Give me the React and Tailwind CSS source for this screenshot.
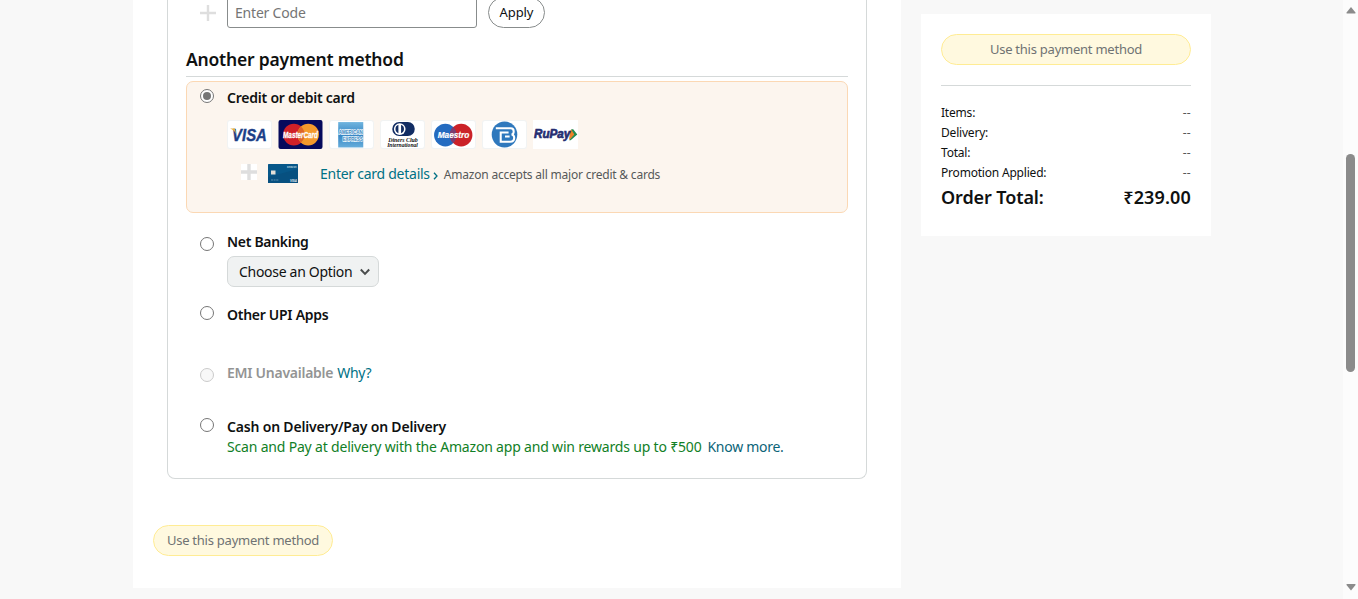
import React from 'react';

function Radio({ checked, disabled }) {
  return (
    <span
      className={
        'flex size-[14px] shrink-0 items-center justify-center rounded-full border ' +
        (disabled ? 'border-[#cbcbcb] bg-[#f8f8f8]' : 'border-[#767676] bg-white')
      }
    >
      {checked && <span className="size-[8px] rounded-full bg-[#757575]" />}
    </span>
  );
}

function Plus({ className, weight }) {
  return (
    <svg viewBox="0 0 16 16" className={className}>
      <path d="M8 0v16M0 8h16" stroke="#dedede" strokeWidth={weight} />
    </svg>
  );
}

function Logo({ children }) {
  return (
    <svg viewBox="0 0 44 28" preserveAspectRatio="none" className="h-[29px] w-[45px] shrink-0" fontFamily="Liberation Sans, sans-serif">
      {children}
    </svg>
  );
}

const Plate = ({ fill = '#fff', stroke = '#f1f3f3' }) => (
  <rect x="0.5" y="0.5" width="43" height="27" rx="2.5" fill={fill} stroke={stroke} />
);

function CardLogos() {
  return (
    <div className="mt-[14px] flex h-[29px] gap-[6px]">
      <Logo>
        <Plate />
        <text x="5" y="20" fontSize="16.5" fontWeight="bold" fontStyle="italic" fill="#1c3f88" stroke="#1c3f88" strokeWidth="0.4" textLength="34" lengthAdjust="spacingAndGlyphs">VISA</text>
        <path d="M3 8.2h4.600l1.600 6C8 11 6 9.500 3 8.200z" fill="#e8b23c" />
      </Logo>
      <Logo>
        <rect x="0.5" width="43" height="28" rx="2" fill="#060a5c" />
        <circle cx="15.500" cy="14" r="10.500" fill="#cf2028" />
        <circle cx="29.500" cy="14" r="10.500" fill="#f49a2c" />
        <path d="M22.500 6.200a10.500 10.500 0 0 1 0 15.600a10.500 10.500 0 0 1 0-15.600z" fill="#dd6529" />
        <text x="5" y="17.200" fontSize="8.5" fontWeight="bold" fontStyle="italic" fill="#fff" stroke="#fff" strokeWidth="0.300" textLength="34" lengthAdjust="spacingAndGlyphs">MasterCard</text>
      </Logo>
      <Logo>
        <Plate />
        <defs>
          <linearGradient id="amex" x1="0" y1="0" x2="0" y2="1">
            <stop offset="0" stopColor="#70b5df" />
            <stop offset="0.500" stopColor="#3585c4" />
            <stop offset="1" stopColor="#66addb" />
          </linearGradient>
        </defs>
        <rect x="9" y="2" width="24.500" height="24.500" fill="url(#amex)" />
        <text x="9.500" y="13.800" fontSize="5.500" fontWeight="bold" fill="#3a86bf" stroke="#eff8fd" strokeWidth="1.300" paintOrder="stroke" textLength="23.500" lengthAdjust="spacingAndGlyphs">AMERICAN</text>
        <text x="13.500" y="20" fontSize="5.500" fontWeight="bold" fill="#3a86bf" stroke="#eff8fd" strokeWidth="1.300" paintOrder="stroke" textLength="19.500" lengthAdjust="spacingAndGlyphs">EXPRESS</text>
      </Logo>
      <Logo>
        <Plate />
        <rect x="12" y="2" width="22" height="13.500" rx="6.750" fill="#112d64" />
        <circle cx="19.300" cy="8.750" r="5.700" fill="#fff" />
        <path d="M18 4.700a4.300 4.300 0 0 0 0 8.100zM20.600 4.700a4.300 4.300 0 0 1 0 8.100z" fill="#112d64" />
        <text x="8" y="21.300" fontFamily="Liberation Serif, serif" fontSize="6.5" fontWeight="bold" fontStyle="italic" fill="#111" textLength="29" lengthAdjust="spacingAndGlyphs">Diners Club</text>
        <text x="7" y="26.300" fontFamily="Liberation Serif, serif" fontSize="6" fontWeight="bold" fontStyle="italic" fill="#111" textLength="30" lengthAdjust="spacingAndGlyphs">International</text>
      </Logo>
      <Logo>
        <Plate />
        <circle cx="14" cy="14.500" r="11" fill="#236bc0" />
        <circle cx="29.500" cy="14.500" r="11" fill="#cb2229" />
        <path d="M21.800 6.700a11 11 0 0 1 0 15.600a11 11 0 0 1 0-15.600z" fill="#7b3c70" />
        <text x="6.500" y="17.700" fontSize="9" fontWeight="bold" fontStyle="italic" fill="#fff" stroke="#fff" strokeWidth="0.200" textLength="31" lengthAdjust="spacingAndGlyphs">Maestro</text>
      </Logo>
      <Logo>
        <Plate />
        <circle cx="22" cy="14" r="12.500" fill="#2e78bd" />
        <path d="M13.500 8H28q3 0 3 3 0 2.500-2 3 2.500.5 2.500 3.200 0 3.800-4 3.800H18.300V12H26M22.500 16H27" fill="none" stroke="#fff" strokeWidth="2" />
      </Logo>
      <Logo>
        <rect width="44" height="28" fill="#fff" />
        <path d="M37.500 9l3.500 5-5.500 5.500z" fill="#ef8128" />
        <path d="M37.300 9l2 0 4 5-6.500 5.500-1.500 0 5-5.500z" fill="#238b50" />
        <path d="M36.500 9.500l3.500 4.500-4.800 5z" fill="#ef8128" />
        <text x="1" y="17.500" fontSize="11.500" fontWeight="bold" fontStyle="italic" fill="#252d71" stroke="#252d71" strokeWidth="0.600" textLength="35.500" lengthAdjust="spacingAndGlyphs">RuPay</text>
      </Logo>
    </div>
  );
}

function CardThumb() {
  return (
    <svg viewBox="0 0 30 19" className="ml-[11px] h-[19px] w-[30px]" fontFamily="Liberation Sans, sans-serif">
      <rect width="30" height="19" rx="0.500" fill="#075789" />
      <path d="M0 13L30 5v14H0z" fill="#075080" />
      <rect x="3" y="6.500" width="4.500" height="4" fill="#e4dfd7" />
      <path d="M3 16h8" stroke="#6f9db9" strokeWidth="0.800" strokeDasharray="2 .6" />
      <text x="19" y="3.700" fontSize="3.800" fontWeight="bold" fill="#b9d2df" textLength="9.500" lengthAdjust="spacingAndGlyphs">amazon</text>
      <text x="22" y="17.500" fontSize="4" fontWeight="bold" fontStyle="italic" fill="#e5edf2" textLength="7" lengthAdjust="spacingAndGlyphs">VISA</text>
    </svg>
  );
}

function SummaryRow({ label }) {
  return (
    <div className="flex h-[20px] items-center justify-between text-[12px] leading-[20px] tracking-[-0.2px]">
      <span>{label}</span>
      <span className="tracking-[0.3px] text-[#565959]">--</span>
    </div>
  );
}

export default function App() {
  return (
    <div className="flex h-[599px] w-[1358px] items-start overflow-hidden bg-[#f8f8f8] font-['Noto_Sans',sans-serif] text-[#0f1111]">
      <main className="ml-[133px] h-[588px] w-[768px] shrink-0 bg-white px-[20px]">
        <section className="ml-[14px] flex h-[479px] w-[700px] flex-col rounded-b-lg border border-t-0 border-[#d5d9d9] px-[18px]">
          <div className="-mt-[3px] flex h-[31px] shrink-0 items-center">
            <Plus weight={2.4} className="mt-px ml-[14px] size-[16px]" />
            <input
              placeholder="Enter Code"
              className="ml-[11px] h-[31px] w-[250px] rounded-[3px] border border-[#888c8c] px-[7px] text-[14px] tracking-[-0.2px] outline-none placeholder:text-[#757575]"
            />
            <button className="ml-[11px] h-[31px] w-[57px] rounded-full border border-[#888c8c] text-[13px] tracking-[-0.1px]">Apply</button>
          </div>
          <h2 className="mt-[19px] h-[30px] shrink-0 border-b border-[#d5d9d9] text-[17.5px] leading-[24px] font-semibold tracking-[-0.2px] whitespace-nowrap">
            Another payment method
          </h2>

          <div className="mt-[4px] flex h-[132px] shrink-0 items-start rounded-[7px] border border-[#fbd8b4] bg-[#fcf5ee]">
            <div className="mt-[7px] ml-[13px]"><Radio checked /></div>
            <div className="ml-[13px] pt-[6px]">
              <div className="h-[18px] text-[14px] leading-[20px] font-semibold tracking-[-0.22px]">Credit or debit card</div>
              <CardLogos />
              <div className="mt-[15px] flex h-[20px] items-start whitespace-nowrap">
                <span className="ml-[14px] size-[16px] bg-white"><Plus weight={3.4} className="size-[16px]" /></span>
                <CardThumb />
                <a className="ml-[22px] text-[14px] leading-[20px] tracking-[-0.26px] text-[#007185]">Enter card details</a>
                <svg viewBox="0 0 5 8" className="mt-[8px] ml-[3px] h-[8px] w-[5px]">
                  <path d="M1 .7L4 4 1 7.300" fill="none" stroke="#007185" strokeWidth="1.300" />
                </svg>
                <span className="ml-[6px] text-[12px] leading-[21px] tracking-[-0.21px] text-[#565959]">Amazon accepts all major credit &amp; cards</span>
              </div>
            </div>
          </div>

          <div className="mt-[19px] flex h-[73px] shrink-0 items-start pl-[14px]">
            <div className="mt-[5px]"><Radio /></div>
            <div className="ml-[13px]">
              <div className="h-[24px] text-[14px] leading-[20px] font-semibold tracking-[-0.3px]">Net Banking</div>
              <button className="flex h-[31px] w-[152px] items-center rounded-[7px] border border-[#d5d9d9] bg-[#f0f2f2] pl-[11px] text-[14px] whitespace-nowrap">
                <span className="-mt-px tracking-[-0.3px]">Choose an Option</span>
                <svg viewBox="0 0 10 8" className="mr-[8px] ml-auto h-[8px] w-[10px]">
                  <path d="M.8 1.500L5 5.900 9.200 1.500" fill="none" stroke="#4a4d4d" strokeWidth="2" />
                </svg>
              </button>
            </div>
          </div>

          <div className="flex h-[58px] shrink-0 items-start pl-[14px]">
            <div className="mt-[1px]"><Radio /></div>
            <div className="ml-[13px] text-[14px] leading-[20px] font-semibold tracking-[-0.28px]">Other UPI Apps</div>
          </div>

          <div className="flex h-[54px] shrink-0 items-start pl-[14px] text-[14px] leading-[20px] tracking-[-0.26px]">
            <div className="mt-[5px]"><Radio disabled /></div>
            <span className="ml-[13px] font-semibold text-[#939494]">EMI Unavailable</span>
            <a className="ml-[4px] text-[#007185]">Why?</a>
          </div>

          <div className="flex items-start pl-[14px]">
            <div className="mt-[1px]"><Radio /></div>
            <div className="ml-[13px] text-[14px] leading-[20px] whitespace-nowrap">
              <div className="font-semibold tracking-[-0.18px]">Cash on Delivery/Pay on Delivery</div>
              <div className="flex">
                <span className="tracking-[-0.185px] text-[#118026]">Scan and Pay at delivery with the Amazon app and win rewards up to ₹500</span>
                <a className="ml-[6px] tracking-[-0.28px] text-[#0b6478]">Know more.</a>
              </div>
            </div>
          </div>
        </section>
        <button className="mt-[46px] h-[31px] w-[180px] rounded-full border border-[#ffec94] bg-[#fff9df] text-[13px] tracking-[-0.24px] whitespace-nowrap text-[#6f7373]">
          Use this payment method
        </button>
      </main>

      <aside className="mt-[14px] ml-[20px] h-[222px] w-[290px] shrink-0 bg-white px-[20px] pt-[20px]">
        <button className="h-[31px] w-full rounded-full border border-[#ffec94] bg-[#fff9df] text-[13px] tracking-[-0.24px] text-[#6f7373]">Use this payment method</button>
        <div className="mt-[20px] mb-[17px] h-px bg-[#d5d9d9]" />
        <SummaryRow label="Items:" />
        <SummaryRow label="Delivery:" />
        <SummaryRow label="Total:" />
        <SummaryRow label="Promotion Applied:" />
        <div className="mt-[2px] flex justify-between text-[18px] leading-[24px] font-semibold">
          <span className="tracking-[-0.1px]">Order Total:</span>
          <span className="tracking-[0.15px]">₹239.00</span>
        </div>
      </aside>

      <div className="ml-auto flex h-full w-[15px] flex-col items-center bg-[#fcfcfc]">
        <svg viewBox="0 0 10 7" className="mt-[7px] h-[7px] w-[10px]"><path d="M5 0L9.500 5.500Q9.800 6.500 9 6.500H1Q.2 6.500.5 5.500z" fill="#8b8b8b" /></svg>
        <div className="mt-[140px] h-[218px] w-[9px] rounded-full bg-[#8b8b8b]" />
        <svg viewBox="0 0 10 7" className="mt-auto mb-[8px] h-[7px] w-[10px]"><path d="M5 6.500L.5 1Q.2 0 1 0H9Q9.800 0 9.500 1z" fill="#8b8b8b" /></svg>
      </div>
    </div>
  );
}
